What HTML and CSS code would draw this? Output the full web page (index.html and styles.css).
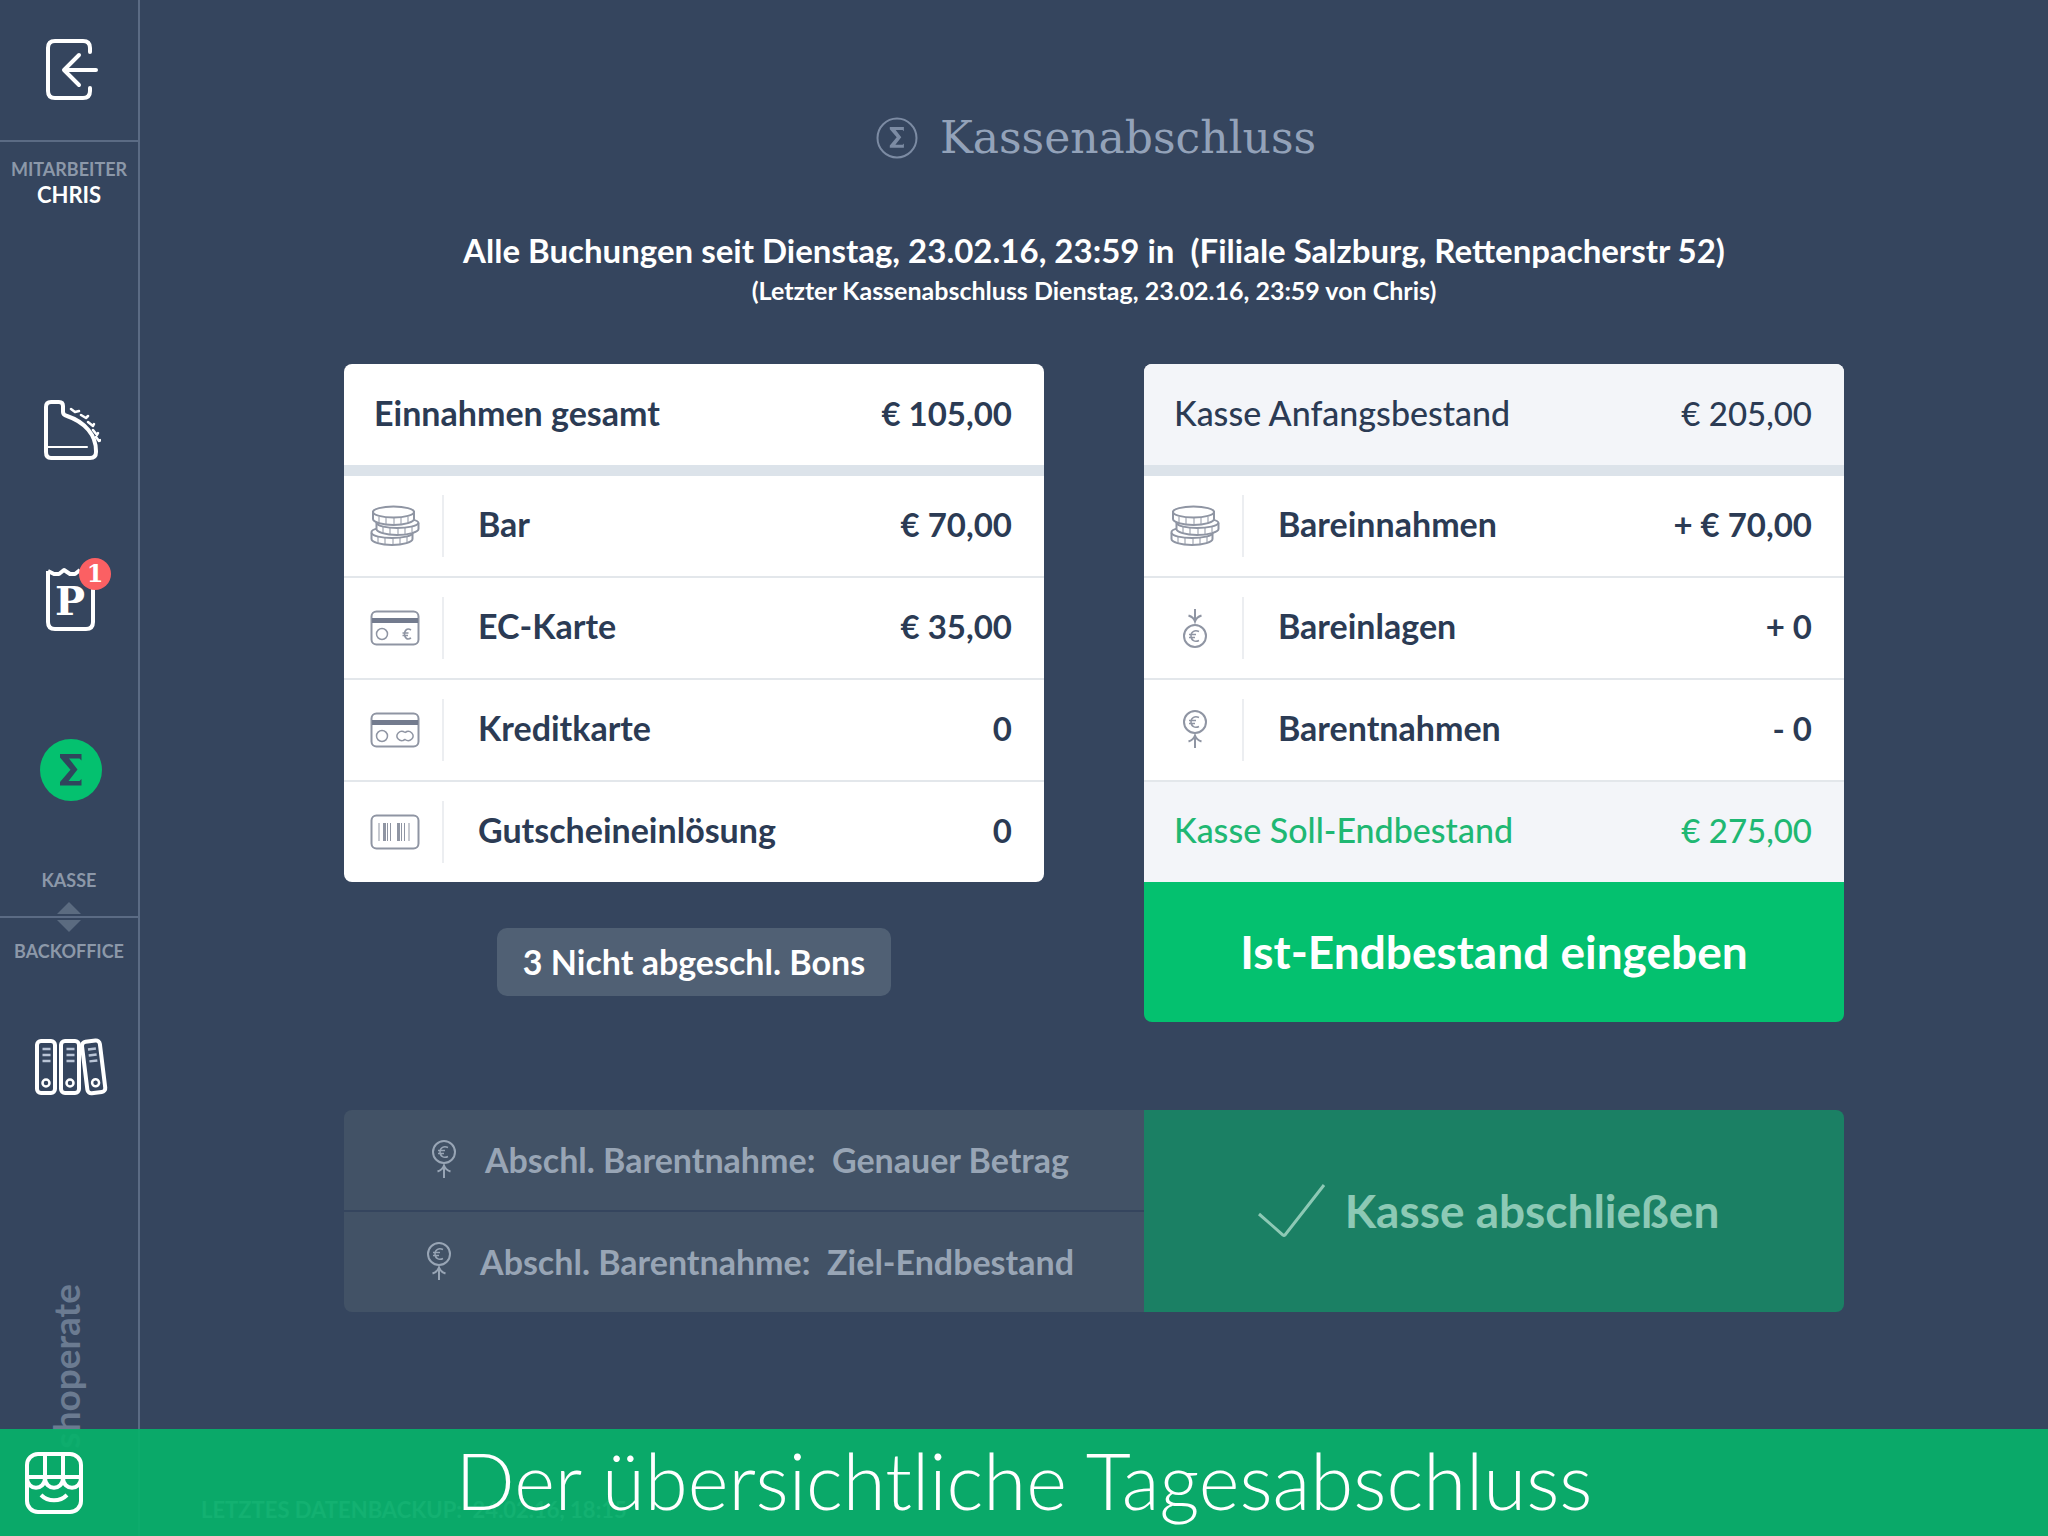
FILE: index.html
```html
<!DOCTYPE html>
<html lang="de">
<head>
<meta charset="utf-8">
<meta name="viewport" content="width=device-width, initial-scale=1">
<title>Kassenabschluss</title>
<link rel="stylesheet" href="styles.css">
</head>
<body>
<svg class="sprite" aria-hidden="true">
  <symbol id="coins" viewBox="0 0 50 42">
    <g fill="#fff" stroke="currentColor" stroke-width="2">
      <path d="M1.500 27v7c0 3 9 6 20.500 6s20.500-3 20.500-6v-7c0-3-9-5-20.500-5S1.500 24 1.500 27z"/>
      <path d="M1.500 28c1 3 10 5 20.500 5s20.500-2 20.500-5" fill="none"/>
      <path d="M6.500 18v6c0 3 9 6 20.500 6s21.500-3 21.500-6v-6c0-3-10-5-21-5s-21 2-21 5z"/>
      <path d="M6.500 18c1 3 10 5 20.500 5s20.500-2 21.500-5" fill="none"/>
      <path d="M3 7v7c0 3 9 6 20.500 6S44 17 44 14V7z"/>
      <ellipse cx="23.500" cy="7" rx="20.500" ry="5.500"/>
    </g>
    <path d="M9 12v6M16 13v6M24 13v6M31 13v6M38 12v6M13 22v6M20 23v6M28 23v6M35 23v6M42 21v6M8 32v6M15 33v6M23 33v6M30 33v6M37 32v6" stroke="currentColor" stroke-width="1" fill="none"/>
  </symbol>
  <symbol id="card" viewBox="0 0 50 36">
    <rect x="1.500" y="1.500" width="47" height="33" rx="5" fill="none" stroke="currentColor" stroke-width="2"/>
    <path d="M2 8h46v5H2z" fill="#737b8e"/>
    <circle cx="12" cy="24" r="5.500" fill="none" stroke="currentColor" stroke-width="1.500"/>
  </symbol>
  <symbol id="euro" viewBox="0 0 10 12">
    <path d="M9 2C5-.5 2.500 2.500 2.500 6S5 12.500 9 10M.5 5h6M.5 7.500h5.500" fill="none" stroke="currentColor" stroke-width="1.600"/>
  </symbol>
  <symbol id="cash-out" viewBox="0 0 26 42">
    <g fill="none" stroke="currentColor" stroke-width="2">
      <circle cx="13" cy="13" r="11"/>
      <path d="M13 39V26M6.500 32.500c3-1 5.500-3 6.500-6 1 3 3.500 5 6.500 6"/>
      <path d="M17 8.500c-4-2-8 0-8 4.500s4 6.500 8 4.500M7 11.500h7M7 14.500h6" stroke-width="1.500"/>
    </g>
  </symbol>
  <symbol id="cash-in" viewBox="0 0 26 42">
    <g fill="none" stroke="currentColor" stroke-width="2">
      <circle cx="13" cy="29" r="11"/>
      <path d="M13 2v13M6.500 8.500c3 1 5.500 3 6.500 6 1-3 3.500-5 6.500-6"/>
      <path d="M17 24.500c-4-2-8 0-8 4.500s4 6.500 8 4.500M7 27.500h7M7 30.500h6" stroke-width="1.500"/>
    </g>
  </symbol>
  <symbol id="sigma" viewBox="0 0 22 32">
    <path d="M0 0h21.500v6.500l-2-2H9L17.500 15.500 8.500 27h11l2-2v6.500H0V28L10.500 15.800 0 3.500z" fill="currentColor"/>
  </symbol>
</svg>

<div class="app">
  <aside class="sidebar">
    <button class="side-button logout" type="button" aria-label="Abmelden">
      <svg width="60" height="68" viewBox="44 36 60 68" fill="none" stroke="#fff" stroke-width="4" stroke-linecap="round" stroke-linejoin="round">
        <path d="M91 52v-4q0-7-7-7H56q-7 0-7 7v43q0 7 7 7h28q7 0 7-7v-3M97 70H66M80 55 65 70l15 15"/>
      </svg>
    </button>
    <div class="user"><span class="side-label">MITARBEITER</span><strong>CHRIS</strong></div>
    <nav class="nav">
      <button class="side-button" type="button" aria-label="Kasse">
        <svg width="60" height="64" viewBox="42 398 60 64" fill="none" stroke="#fff" stroke-linecap="round" stroke-linejoin="round">
          <path d="M47 407q0-5 5-5h8q4 0 4 4v6q0 3 4 4c18 6 29 19 29 35v1q0 6-6 6H52q-5 0-5-6z" stroke-width="4"/>
          <path d="M49 447h39" stroke-width="2"/>
          <path d="M72 409l4 3 4-1M82 415l5 3 2-2M89 422l5 4 1-2M94 430l4 5 1-2M97 437l3 4 2-1" stroke-width="2.500"/>
        </svg>
      </button>
      <button class="side-button" type="button" aria-label="Geparkte Bons">
        <span class="badged">
          <svg width="56" height="68" viewBox="44 566 56 68" fill="none" stroke="#fff" stroke-width="4" stroke-linejoin="round">
            <path d="M49 571v51q0 7 7 7h31q7 0 7-7v-49M49 571l6 3 5 0 5-4 6 4 5 0 5-4"/>
            <text class="slab-letter" x="71" y="615" text-anchor="middle">P</text>
          </svg>
          <span class="badge">1</span>
        </span>
      </button>
      <button class="side-button" type="button" aria-label="Kassenabschluss">
        <span class="disc"><svg width="22" height="32"><use href="#sigma"/></svg></span>
      </button>
    </nav>
    <div class="switch">
      <span class="side-label">KASSE</span>
      <svg class="arrow" width="24" height="12" viewBox="0 0 24 12"><path d="M12 0 24 12H0z" fill="currentColor"/></svg>
      <hr>
      <svg class="arrow" width="24" height="12" viewBox="0 0 24 12"><path d="M12 12 24 0H0z" fill="currentColor"/></svg>
      <span class="side-label">BACKOFFICE</span>
    </div>
    <button class="side-button" type="button" aria-label="Backoffice">
      <svg width="76" height="60" viewBox="34 1038 76 60" fill="none" stroke="#fff" stroke-width="4">
        <g id="binder"><rect x="38" y="1042" width="18" height="52" rx="4"/><circle cx="47" cy="1084" r="3.500" stroke-width="2.500"/><path d="M43.500 1050h8M43.500 1056h8M43.500 1062h8" stroke="#b9c4d6" stroke-width="2.500"/></g>
        <use href="#binder" x="24"/>
        <use href="#binder" transform="translate(47 3) rotate(-7 47 1068) translate(1 -3)"/>
      </svg>
    </button>
    <div class="brand">shoperate</div>
  </aside>

  <main class="main">
    <h1 class="title">
      <svg width="42" height="42" viewBox="0 0 42 42"><circle cx="21" cy="21" r="19.500" fill="none" stroke="currentColor" stroke-width="2"/><use href="#sigma" x="13" y="10" width="16" height="21"/></svg>
      Kassenabschluss
    </h1>
    <p class="lead">Alle Buchungen seit Dienstag, 23.02.16, 23:59 in&nbsp; (Filiale Salzburg, Rettenpacherstr 52)</p>
    <p class="sublead">(Letzter Kassenabschluss Dienstag, 23.02.16, 23:59 von Chris)</p>

    <div class="columns">
      <section class="column">
        <table class="ledger">
          <thead><tr><th colspan="2" scope="row">Einnahmen gesamt</th><td>€ 105,00</td></tr></thead>
          <tbody>
            <tr><td class="icon"><span><svg width="50" height="42"><use href="#coins"/></svg></span></td><th scope="row">Bar</th><td>€ 70,00</td></tr>
            <tr><td class="icon"><span><svg width="50" height="36"><use href="#card"/><use href="#euro" x="32" y="18" width="10" height="12"/></svg></span></td><th scope="row">EC-Karte</th><td>€ 35,00</td></tr>
            <tr><td class="icon"><span><svg width="50" height="36"><use href="#card"/><path d="M35 20.500a5 4.500 0 1 0 0 7 5 4.500 0 1 0 0-7M35 20.500l2-1M35 27.500l-2 1" fill="none" stroke="currentColor" stroke-width="1.500"/></svg></span></td><th scope="row">Kreditkarte</th><td>0</td></tr>
            <tr><td class="icon"><span><svg width="50" height="36" fill="none" stroke="currentColor"><rect x="1.500" y="1.500" width="47" height="33" rx="5" stroke-width="2"/><path d="M9 9v18M20.500 9v18M34.500 9v18" stroke-width="1"/><path d="M14.500 9v18M28.500 9v18" stroke-width="3"/><path d="M17.500 9v18M31.500 9v18M39 9v18" stroke-width="1"/></svg></span></td><th scope="row">Gutscheineinlösung</th><td>0</td></tr>
          </tbody>
        </table>
        <button class="pill" type="button">3 Nicht abgeschl. Bons</button>
      </section>

      <section class="column">
        <div class="stack">
          <table class="ledger">
            <thead class="soft"><tr><th colspan="2" scope="row">Kasse Anfangsbestand</th><td>€ 205,00</td></tr></thead>
            <tbody>
              <tr><td class="icon"><span><svg width="50" height="42"><use href="#coins"/></svg></span></td><th scope="row">Bareinnahmen</th><td>+ € 70,00</td></tr>
              <tr><td class="icon"><span><svg width="26" height="42"><use href="#cash-in"/></svg></span></td><th scope="row">Bareinlagen</th><td>+ 0</td></tr>
              <tr><td class="icon"><span><svg width="26" height="42"><use href="#cash-out"/></svg></span></td><th scope="row">Barentnahmen</th><td>- 0</td></tr>
            </tbody>
            <tfoot class="soft"><tr><th colspan="2" scope="row">Kasse Soll-Endbestand</th><td>€ 275,00</td></tr></tfoot>
          </table>
          <button class="primary" type="button">Ist-Endbestand eingeben</button>
        </div>
      </section>
    </div>

    <div class="closing">
      <div class="options">
        <button class="option" type="button" disabled><svg width="50" height="42"><use href="#cash-out"/></svg>Abschl. Barentnahme:&nbsp; Genauer Betrag</button>
        <button class="option" type="button" disabled><svg width="50" height="42"><use href="#cash-out"/></svg>Abschl. Barentnahme:&nbsp; Ziel-Endbestand</button>
      </div>
      <button class="finish" type="button" disabled>
        <svg width="70" height="54" viewBox="0 0 70 54" fill="none" stroke="currentColor" stroke-width="3"><path d="M2 30 26 51q1 1 2 0L67 1"/></svg>
        Kasse abschließen
      </button>
    </div>
    <p class="backup">LETZTES DATENBACKUP:&nbsp; 24.02.16, 18:15</p>
  </main>
</div>

<footer class="banner">
  <svg width="58" height="62" viewBox="0 0 58 62" fill="none" stroke="#fff" stroke-width="4">
    <rect x="2" y="2" width="54" height="58" rx="11"/>
    <path d="M20 3v23M38 3v23M2 25h54"/>
    <path d="M2 26c0 13 18 13 18 0 0 13 18 13 18 0 0 13 18 13 18 0"/>
    <path d="M16 43c7 7 19 7 26 0"/>
  </svg>
  <p>Der übersichtliche Tagesabschluss</p>
</footer>
</body>
</html>
```
FILE: styles.css
```css
* { box-sizing: border-box; }

body {
  margin: 0;
  background: #35455e;
  color: #fff;
  font-family: Lato, "Open Sans", sans-serif;
  font-size: 34px;
  line-height: 40px;
}

p, h1 { margin: 0; }

button {
  border: 0;
  padding: 0;
  background: none;
  color: inherit;
  font: inherit;
}

svg { display: block; flex: none; }
.sprite { position: absolute; width: 0; height: 0; }

.app {
  display: flex;
  min-height: 100vh;
}

/* Sidebar */
.sidebar {
  display: flex;
  flex-direction: column;
  flex: none;
  width: 140px;
  border-right: 2px solid #5b6b84;
}

.side-button {
  display: flex;
  align-items: center;
  justify-content: center;
  width: 100%;
  height: 170px;
  padding-left: 4px;
}

.logout {
  height: 142px;
  padding-left: 8px;
  border-bottom: 2px solid #5b6b84;
}

.user {
  display: flex;
  flex-direction: column;
  align-items: center;
  height: 203px;
  padding-top: 14px;
  font-size: 22px;
  line-height: 26px;
}

.side-label {
  color: #8c98a9;
  font-size: 18px;
  line-height: 26px;
  font-weight: 700;
}

.badged { position: relative; }

.badge {
  position: absolute;
  top: -8px;
  right: -12px;
  width: 32px;
  height: 32px;
  border-radius: 50%;
  background: #fb6063;
  font: bold 24px/32px "DejaVu Serif", serif;
}

.slab-letter {
  fill: #fff;
  stroke: none;
  font: bold 40px "DejaVu Serif", serif;
}

.disc {
  display: flex;
  align-items: center;
  justify-content: center;
  width: 62px;
  height: 62px;
  border-radius: 50%;
  background: #04c16f;
  color: #30455c;
}

.switch {
  display: flex;
  flex-direction: column;
  align-items: center;
  gap: 2px;
  padding: 12px 0 18px;
}

.switch hr {
  width: 100%;
  margin: 0;
  border: 0;
  border-top: 2px solid #5b6b84;
}

.switch .side-label:first-child { margin-bottom: 7px; }
.switch .side-label:last-child { margin-top: 4px; }
.arrow { color: #5b6b80; }

.brand {
  align-self: center;
  margin: 132px 6px 0 0;
  color: #6b7b91;
  font-size: 37px;
  font-weight: 700;
  writing-mode: vertical-rl;
  transform: rotate(180deg);
}

/* Main area */
.main {
  display: flex;
  flex-direction: column;
  flex: 1;
  padding: 108px 204px 0;
}

.title {
  display: flex;
  align-items: center;
  justify-content: center;
  gap: 22px;
  padding-left: 4px;
  color: #93a2b9;
  font: 44px/60px "DejaVu Serif", serif;
}

.title svg { color: #7c8ba3; }

.lead {
  margin-top: 62px;
  font-size: 33px;
  font-weight: 700;
  text-align: center;
}

.sublead {
  margin-bottom: 54px;
  font-size: 25px;
  font-weight: 700;
  text-align: center;
}

.columns {
  display: grid;
  grid-template-columns: 1fr 1fr;
  gap: 100px;
}

.column {
  display: flex;
  flex-direction: column;
}

.ledger {
  width: 100%;
  border-spacing: 0;
  border-radius: 8px;
  overflow: hidden;
  background: #fff;
  color: #2b3b54;
  font-weight: 700;
}

.ledger th, .ledger td {
  height: 102px;
  padding: 0 32px 4px 30px;
  border-bottom: 2px solid #e3e7eb;
  font-weight: inherit;
  text-align: left;
}

.ledger thead th, .ledger thead td {
  height: 112px;
  border-bottom: 11px solid #dce3ea;
}

.ledger td { font-size: 33px; text-align: right; white-space: nowrap; }
.ledger td.icon { width: 100px; padding: 0; }
.ledger tbody th { padding-left: 34px; }
.ledger > :last-child tr:last-child > * { height: 100px; border-bottom: 0; }
.ledger .soft { background: #f3f5f9; font-weight: 500; }
.ledger tfoot { color: #1fb873; }

.icon span {
  display: flex;
  align-items: center;
  justify-content: center;
  height: 62px;
  padding-left: 4px;
  border-right: 2px solid #eceef1;
  color: #8f95a3;
}

.pill {
  align-self: center;
  margin-top: 46px;
  padding: 14px 26px;
  border-radius: 10px;
  background: #506074;
  font-weight: 700;
}

.stack {
  border-radius: 8px;
  overflow: hidden;
}

.stack .ledger { border-radius: 0; }

.primary {
  display: block;
  width: 100%;
  height: 140px;
  background: #04c16f;
  font-size: 46px;
  font-weight: 700;
}

.closing {
  display: grid;
  grid-template-columns: 8fr 7fr;
  margin-top: 88px;
  border-radius: 8px;
  overflow: hidden;
}

.options {
  display: grid;
  gap: 2px;
}

.option {
  display: flex;
  align-items: center;
  justify-content: center;
  gap: 16px;
  height: 100px;
  background: #425266;
  color: #98a5b5;
  font-weight: 700;
}

.finish {
  display: flex;
  align-items: center;
  justify-content: center;
  gap: 18px;
  padding-right: 12px;
  background: #1b8064;
  color: #8dc9b5;
  font-size: 46px;
  font-weight: 700;
}

/* Starts left of the centred content, near the sidebar */
.backup {
  align-self: flex-start;
  margin: auto 0 12px -143px;
  color: #a3b1c6;
  font-size: 22px;
  line-height: 28px;
  font-weight: 700;
}

/* Caption bar over the bottom edge */
.banner {
  position: fixed;
  inset: auto 0 0;
  display: grid;
  grid-template-columns: 58px 1fr 58px;
  align-items: center;
  height: 107px;
  padding: 0 25px;
  background: rgba(7, 176, 106, .93);
}

.banner p {
  padding-bottom: 4px;
  font-size: 78px;
  line-height: 103px;
  font-weight: 300;
  text-align: center;
}
```
